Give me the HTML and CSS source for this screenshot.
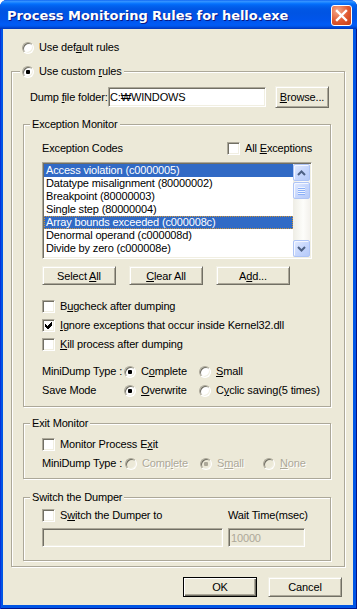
FILE: index.html
```html
<!DOCTYPE html>
<html lang="en">
<head>
  <meta charset="UTF-8">
  <meta name="viewport" content="width=device-width, initial-scale=1.0">
  <title>Process Monitoring Rules</title>
  <link rel="stylesheet" href="styles.css">
</head>
<body>
  <div class="window">
    <div class="titlebar">
      <span class="title">Process Monitoring Rules for hello.exe</span>
      <span class="close">
        <svg width="19" height="19" viewBox="0 0 19 19"><path d="M5 5l9 9M14 5l-9 9" stroke="#fff" stroke-width="2.4" stroke-linecap="square"/></svg>
      </span>
    </div>

    <div class="client">
      <div class="radio topRadio"><span class="radioBox"></span><span>Use def<u>a</u>ult rules</span></div>

      <div class="group outerGroup">
        <div class="groupTitle">
          <div class="radio"><span class="radioBox checked"></span><span>Use custom <u>r</u>ules</span></div>
        </div>

        <div class="folderRow">
          <span class="folderLabel">Dump <u>f</u>ile folder:</span>
          <input class="edit folderEdit" type="text" value="C:₩WINDOWS">
          <button class="button browse"><span><u>B</u>rowse...</span></button>
        </div>

        <div class="group innerGroup exceptionGroup">
          <div class="groupTitle innerTitle">Exception Monitor</div>
          <div class="codesRow">
            <span>Exception Codes</span>
            <div class="check"><span class="checkBox"></span><span>All <u>E</u>xceptions</span></div>
          </div>

          <div class="listbox">
            <ul class="listItems">
              <li class="selected">Access violation (c0000005)</li>
              <li>Datatype misalignment (80000002)</li>
              <li>Breakpoint (80000003)</li>
              <li>Single step (80000004)</li>
              <li class="selected focused">Array bounds exceeded (c000008c)</li>
              <li>Denormal operand (c000008d)</li>
              <li>Divide by zero (c000008e)</li>
              <li>Inexact result (c000008f)</li>
            </ul>
            <div class="scrollbar">
              <div class="sbButton">
                <svg width="9" height="6" viewBox="0 0 9 6"><path d="M1 5l3.5-3.5L8 5" fill="none" stroke="#4d6185" stroke-width="2"/></svg>
              </div>
              <div class="sbTrack">
                <div class="sbThumb"><span class="grip"></span></div>
              </div>
              <div class="sbButton">
                <svg width="9" height="6" viewBox="0 0 9 6"><path d="M1 1l3.5 3.5L8 1" fill="none" stroke="#4d6185" stroke-width="2"/></svg>
              </div>
            </div>
          </div>

          <div class="listButtons">
            <button class="button"><span>Select <u>A</u>ll</span></button>
            <button class="button"><span><u>C</u>lear All</span></button>
            <button class="button"><span>A<u>d</u>d...</span></button>
          </div>

          <div class="options">
            <div class="check"><span class="checkBox"></span><span>B<u>u</u>gcheck after dumping</span></div>
            <div class="check">
              <span class="checkBox"><svg width="7" height="7" viewBox="0 0 7 7" shape-rendering="crispEdges"><path d="M0 2L2 4L6 0H7V3L3 7H2L0 5Z" fill="#000"/></svg></span>
              <span><u>I</u>gnore exceptions that occur inside Kernel32.dll</span>
            </div>
            <div class="check"><span class="checkBox"></span><span><u>K</u>ill process after dumping</span></div>
          </div>

          <div class="modeGrid">
            <span>MiniDump Type :</span>
            <div class="radio"><span class="radioBox checked"></span><span>C<u>o</u>mplete</span></div>
            <div class="radio"><span class="radioBox"></span><span><u>S</u>mall</span></div>
            <span>Save Mode</span>
            <div class="radio"><span class="radioBox checked"></span><span><u>O</u>verwrite</span></div>
            <div class="radio"><span class="radioBox"></span><span>C<u>y</u>clic saving(5 times)</span></div>
          </div>
        </div>

        <div class="group innerGroup exitGroup">
          <div class="groupTitle innerTitle">Exit Monitor</div>
          <div class="check exitCheck"><span class="checkBox"></span><span>Monitor Process E<u>x</u>it</span></div>
          <div class="modeGrid exitGrid">
            <span>MiniDump Type :</span>
            <div class="radio disabled"><span class="radioBox"></span><span>Comp<u>l</u>ete</span></div>
            <div class="radio disabled"><span class="radioBox checked"></span><span>S<u>m</u>all</span></div>
            <div class="radio disabled"><span class="radioBox"></span><span><u>N</u>one</span></div>
          </div>
        </div>

        <div class="group innerGroup switchGroup">
          <div class="groupTitle innerTitle">Switch the Dumper</div>
          <div class="switchGrid">
            <div class="check"><span class="checkBox"></span><span>S<u>w</u>itch the Dumper to</span></div>
            <span class="waitLabel">Wait Time(msec)</span>
            <input class="edit disabledEdit" type="text" value="" disabled>
            <input class="edit disabledEdit" type="text" value="10000" disabled>
          </div>
        </div>
      </div>

      <div class="dialogButtons">
        <button class="button defaultButton"><span>OK</span></button>
        <button class="button"><span>Cancel</span></button>
      </div>
    </div>
  </div>
</body>
</html>
```

FILE: styles.css
```css
* {
  box-sizing: border-box;
  margin: 0;
  padding: 0;
}
body {
  background-color: #ffffff;
  font-family: "Liberation Sans", Arial, sans-serif;
  font-size: 11px;
  letter-spacing: -0.15px;
  color: #000000;
}

/* window frame */
.window {
  width: 357px;
  height: 609px;
  display: flex;
  flex-direction: column;
  background-color: #0055e5;
  border-radius: 7px 7px 0 0;
  box-shadow: inset 1px 0 #0831d9, inset -1px -1px #00138c;
  overflow: hidden;
}
.titlebar {
  flex: none;
  height: 29px;
  display: flex;
  justify-content: space-between;
  align-items: flex-start;
  padding: 5px 5px 0 7px;
  background: linear-gradient(to bottom, #0058ee 0, #3a93ff 1px, #288eff 2px, #127dff 3px, #036ffc 4px, #0262ee 6px, #0057e5 9px, #0054e3 13px, #0055eb 20px, #005bf5 24px, #0058ee 26px, #0041cc 28px, #0036b6 29px);
}
.title {
  font-family: "DejaVu Sans", sans-serif;
  font-weight: bold;
  font-size: 13px;
  line-height: 21px;
  letter-spacing: -0.05px;
  color: #ffffff;
  text-shadow: 1px 1px #0a1883;
  white-space: nowrap;
}
.close {
  width: 21px;
  height: 21px;
  border: 1px solid #ffffff;
  border-radius: 3px;
  background: radial-gradient(circle at 30% 25%, #f3a98c, #e0582f 55%, #c53d14);
  display: flex;
  align-items: center;
  justify-content: center;
}

.client {
  flex: 1;
  margin: 0 4px 4px 3px;
  padding-top: 12px;
  background-color: #ece9d8;
  display: flex;
  flex-direction: column;
}

/* radios and checkboxes */
.radio,
.check {
  display: flex;
  align-items: center;
  gap: 5px;
  height: 13px;
  line-height: 13px;
  white-space: nowrap;
}
.radioBox {
  flex: none;
  width: 12px;
  height: 12px;
  border-radius: 50%;
  border: 1px solid;
  border-color: #aca899 #ffffff #ffffff #aca899;
  box-shadow: inset 1px 1px #716f64, inset -1px -1px #f1efe2;
  background-color: #ffffff;
  display: flex;
  align-items: center;
  justify-content: center;
}
.radioBox.checked::after {
  content: "";
  width: 4px;
  height: 4px;
  border-radius: 1px;
  background-color: #000000;
}
.radio.disabled {
  color: #aca899;
  text-shadow: 1px 1px #ffffff;
}
.radio.disabled .radioBox {
  background-color: #ece9d8;
}
.radio.disabled .radioBox.checked::after {
  background-color: #aca899;
}
.checkBox {
  flex: none;
  width: 13px;
  height: 13px;
  border: 1px solid;
  border-color: #aca899 #ffffff #ffffff #aca899;
  box-shadow: inset 1px 1px #716f64, inset -1px -1px #f1efe2;
  background-color: #ffffff;
  display: flex;
  align-items: center;
  justify-content: center;
}
.topRadio {
  margin-left: 19px;
}

/* group boxes */
.group {
  border: 1px solid #aca899;
  box-shadow: inset 1px 1px #ffffff, 1px 1px #ffffff;
}
.groupTitle {
  width: fit-content;
  height: 13px;
  line-height: 13px;
  margin: -7px 0 0 -3px;
  padding: 0 2px;
  background-color: #ece9d8;
  white-space: nowrap;
}
.innerTitle {
  margin-left: -12px;
}
.outerGroup {
  margin: 17px 8px 0 8px;
  padding: 0 13px 5px 11px;
}
.innerGroup {
  padding: 0 18px;
}

/* edits and buttons */
.edit {
  height: 20px;
  padding: 0 1px;
  border: 1px solid;
  border-color: #aca899 #ffffff #ffffff #aca899;
  box-shadow: inset 1px 1px #716f64, inset -1px -1px #f1efe2;
  background-color: #ffffff;
  font: inherit;
  letter-spacing: inherit;
  color: #000000;
  outline: none;
}
.button {
  width: 74px;
  height: 19px;
  display: flex;
  align-items: center;
  justify-content: center;
  border: 1px solid;
  border-color: #f1efe2 #716f64 #716f64 #f1efe2;
  box-shadow: inset 1px 1px #ffffff, inset -1px -1px #aca899;
  background-color: #ece9d8;
  font: inherit;
  letter-spacing: inherit;
  color: #000000;
  white-space: nowrap;
}
.defaultButton {
  border-color: #000000;
  box-shadow: inset 1px 1px #ffffff, inset -1px -1px #716f64, inset -2px -2px #aca899;
}

.folderRow {
  display: flex;
  align-items: center;
  height: 22px;
  margin: 8px 0 0 7px;
}
.folderLabel {
  width: 78px;
  white-space: nowrap;
}
.folderEdit {
  width: 158px;
}
.browse {
  width: 54px;
  height: 22px;
  margin-left: 9px;
}

/* exception monitor */
.exceptionGroup {
  margin-top: 16px;
  padding-bottom: 9px;
}
.codesRow {
  display: flex;
  justify-content: space-between;
  align-items: center;
  height: 13px;
  line-height: 13px;
  margin-top: 11px;
}
.listbox {
  width: 270px;
  height: 97px;
  margin-top: 7px;
  padding: 1px;
  display: flex;
  border: 1px solid;
  border-color: #aca899 #ffffff #ffffff #aca899;
  box-shadow: inset 1px 1px #716f64, inset -1px -1px #f1efe2;
  background-color: #ffffff;
}
.listItems {
  flex: 1;
  list-style: none;
  overflow: hidden;
}
.listItems li {
  height: 13px;
  line-height: 13px;
  padding-left: 2px;
  white-space: nowrap;
}
.listItems .selected {
  background-color: #316ac5;
  color: #ffffff;
}
.listItems .focused {
  outline: 1px dotted #ce953a;
  outline-offset: -1px;
}
.scrollbar {
  flex: none;
  width: 17px;
  display: flex;
  flex-direction: column;
  background: linear-gradient(to right, #eeede5, #fdfdfa 60%, #f3f1ec);
}
.sbButton,
.sbThumb {
  height: 17px;
  display: flex;
  align-items: center;
  justify-content: center;
  border: 1px solid #aec4f6;
  border-radius: 2px;
  background: linear-gradient(to bottom right, #e3ebfe, #c7d7fd 50%, #b6caf8);
  box-shadow: inset 1px 1px #f4f7ff;
}
.sbTrack {
  flex: 1;
  padding-top: 1px;
}
.grip {
  width: 7px;
  height: 8px;
  background: repeating-linear-gradient(to bottom, #eef4fe 0 1px, #8cb0f8 1px 2px);
}

.listButtons {
  display: flex;
  gap: 13px;
  margin-top: 7px;
}
.options {
  display: flex;
  flex-direction: column;
  gap: 6px;
  margin-top: 15px;
}
.modeGrid {
  display: grid;
  grid-template-columns: 82px 75px 63px;
  row-gap: 6px;
  align-items: center;
  margin-top: 14px;
  line-height: 13px;
  white-space: nowrap;
}

/* exit monitor */
.exitGroup {
  margin-top: 16px;
  padding-bottom: 8px;
}
.exitCheck {
  margin-top: 8px;
}
.exitGrid {
  grid-template-columns: 83px 75px 63px auto;
  margin-top: 6px;
}

/* switch the dumper */
.switchGroup {
  margin-top: 18px;
  padding-bottom: 13px;
}
.switchGrid {
  display: grid;
  grid-template-columns: 181px 77px;
  column-gap: 5px;
  row-gap: 6px;
  margin-top: 5px;
  line-height: 13px;
}
.waitLabel {
  white-space: nowrap;
}
.disabledEdit {
  height: 19px;
  padding: 0 2px;
  background-color: #ece9d8;
  color: #aca899;
}

.dialogButtons {
  display: flex;
  justify-content: flex-end;
  gap: 11px;
  margin-top: 10px;
  padding-right: 11px;
}
.dialogButtons .button {
  height: 20px;
}
```
